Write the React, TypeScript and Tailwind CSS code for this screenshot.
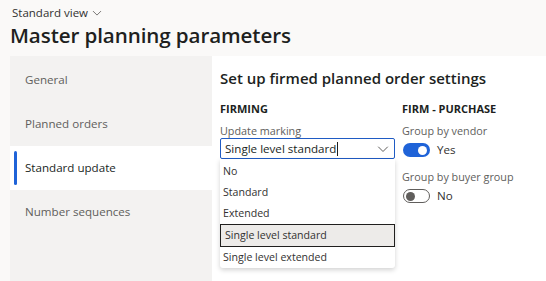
import React from "react";

const font = { fontFamily: '"Open Sans", "Noto Sans", sans-serif' };

function Chevron({ className }: { className?: string }) {
  return (
    <svg className={className} viewBox="0 0 12 12" fill="none" stroke="currentColor" strokeWidth="1" strokeLinecap="round" strokeLinejoin="round">
      <path d="M1.5 4 L6 8.5 L10.5 4" />
    </svg>
  );
}

export default function App() {
  const nav = ["General", "Planned orders", "Standard update", "Number sequences"];
  const options = ["No", "Standard", "Extended", "Single level standard", "Single level extended"];
  return (
    <div className="w-[546px] h-[281px] bg-[#faf9f8] overflow-hidden text-[#201f1e]" style={font}>
      <div className="h-[56px] pl-[12px] pt-[5px]">
        <div className="flex items-center gap-[4px] text-[11.5px] leading-[16px] text-[#323130]">
          <span>Standard view</span>
          <Chevron className="w-[10px] h-[10px] text-[#605e5c]" />
        </div>
        <div className="-ml-[2px] text-[20.6px] leading-[28px] font-semibold tracking-[-0.1px] text-[#201f1e]">
          Master planning parameters
        </div>
      </div>
      <div className="flex ml-[10px] h-[225px]">
        <div className="w-[202px] bg-[#f3f2f1] pt-[2px]">
          {nav.map((n, i) => (
            <div
              key={n}
              className={
                "relative h-[44px] flex items-center pl-[15px] text-[11.6px] " +
                (i === 2 ? "bg-white text-[#201f1e]" : "text-[#605e5c]")
              }
            >
              {i === 2 && <div className="absolute left-[4px] top-[5px] bottom-[5px] w-[3px] rounded-[2px] bg-[#1f63d8]" />}
              {n}
            </div>
          ))}
        </div>
        <div className="flex-1 bg-white pl-[8px] pt-[1px]">
          <div className="mt-[10px] text-[15px] leading-[22px] font-semibold text-[#201f1e]">
            Set up firmed planned order settings
          </div>
          <div className="flex gap-[7px] mt-[13px]">
            <div className="w-[175px]">
              <div className="text-[11px] leading-[14px] font-bold text-[#201f1e]">FIRMING</div>
              <div className="mt-[7px] text-[10.8px] leading-[16px] text-[#605e5c]">Update marking</div>
              <div className="relative -mt-[1px]">
                <div className="h-[21px] border border-[#1f5bc4] rounded-[2px] flex items-center pl-[4px] pr-[5px]">
                  <span className="text-[11.6px] text-[#201f1e] leading-[18px]">Single level standard</span>
                  <span className="w-[1px] h-[14px] bg-[#201f1e] ml-[1px]" />
                  <Chevron className="ml-auto w-[12px] h-[12px] text-[#605e5c]" />
                </div>
                <div className="absolute left-0 right-0 top-[21px] pt-[2px] bg-white rounded-b-[3px] shadow-[0_2px_5px_rgba(0,0,0,0.18)] z-10">
                  {options.map((o, i) => (
                    <div
                      key={o}
                      className={
                        "flex items-center text-[10.6px] text-[#323130] " +
                        (i === 3
                          ? "h-[23px] pl-[4px] bg-[#edebe9] border border-[#201f1e]"
                          : "h-[21px] pl-[3px]")
                      }
                    >
                      {o}
                    </div>
                  ))}
                </div>
              </div>
            </div>
            <div>
              <div className="text-[11px] leading-[14px] font-bold text-[#201f1e]">FIRM - PURCHASE</div>
              <div className="mt-[7px] text-[10.8px] leading-[16px] text-[#605e5c]">Group by vendor</div>
              <div className="flex items-center mt-[4px] ml-[1px] h-[14px]">
                <div className="w-[27px] h-[14px] rounded-full bg-[#1f63d8] flex items-center justify-end pr-[3px]">
                  <div className="w-[9px] h-[9px] rounded-full bg-white" />
                </div>
                <span className="ml-[7px] text-[11.6px] text-[#323130]">Yes</span>
              </div>
              <div className="mt-[12px] text-[10.8px] leading-[16px] text-[#605e5c]">Group by buyer group</div>
              <div className="flex items-center mt-[4px] ml-[1px] h-[14px]">
                <div className="w-[27px] h-[14px] rounded-full border border-[#605e5c] flex items-center pl-[2px]">
                  <div className="w-[9px] h-[9px] rounded-full bg-[#605e5c]" />
                </div>
                <span className="ml-[7px] text-[11.6px] text-[#323130]">No</span>
              </div>
            </div>
          </div>
        </div>
      </div>
    </div>
  );
}
